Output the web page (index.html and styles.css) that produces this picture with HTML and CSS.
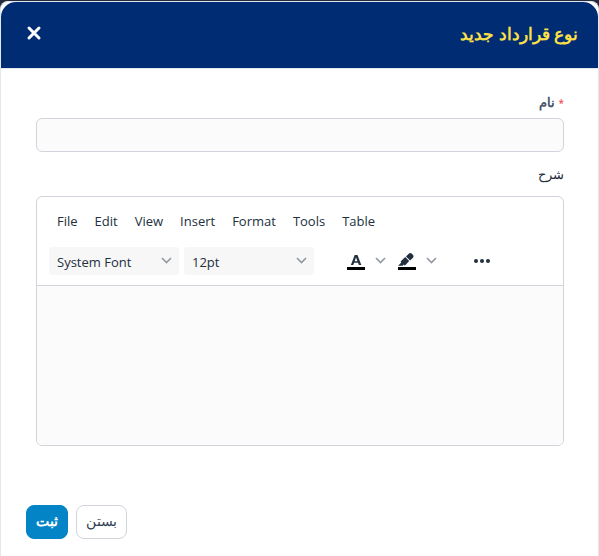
FILE: index.html
```html
<!DOCTYPE html>
<html lang="fa" dir="rtl">
<head>
<meta charset="UTF-8" />
<meta name="viewport" content="width=device-width, initial-scale=1.0"/>
<title>نوع قرارداد جدید</title>
<link rel="stylesheet" href="styles.css">
</head>

<body>

  <form class="modal">

    <header class="modal-header">
      <h1 class="modal-title">نوع قرارداد جدید</h1>
      <button type="button" class="close-btn" aria-label="بستن">
        <svg width="16" height="16" viewBox="0 0 16 16"><path d="M3 3l10 10M13 3L3 13" /></svg>
      </button>
    </header>

    <div class="modal-body">
      <label class="name-label" for="name"><span class="required">*</span> نام</label>
      <input class="name-input" type="text" id="name" name="name" required>

      <label class="desc-label" for="description">شرح</label>

      <div class="editor" dir="ltr">
        <div class="menubar">
          <button type="button">File</button>
          <button type="button">Edit</button>
          <button type="button">View</button>
          <button type="button">Insert</button>
          <button type="button">Format</button>
          <button type="button">Tools</button>
          <button type="button">Table</button>
        </div>

        <div class="toolbar">
          <div class="select-box">
            <select aria-label="Font">
              <option>System Font</option>
            </select>
            <svg class="chevron" width="11" height="8" viewBox="0 0 11 8"><path d="M1 1l4.500 4.500L10 1" /></svg>
          </div>
          <div class="select-box">
            <select aria-label="Font size">
              <option>12pt</option>
            </select>
            <svg class="chevron" width="11" height="8" viewBox="0 0 11 8"><path d="M1 1l4.500 4.500L10 1" /></svg>
          </div>

          <div class="color-group">
            <button type="button" class="tool-btn" aria-label="Text color">
              <svg width="24" height="24" viewBox="0 0 24 24">
                <path d="M3 18h18v3H3z" fill="#000" />
                <path fill-rule="evenodd" d="M9.300 16H6.900L10.700 6h2.800l3.800 10h-2.400l-.8-2.200h-4zM10.700 12.200h2.700L12 8.200z" fill="#222f3e" />
              </svg>
            </button>
            <button type="button" class="arrow-btn" aria-label="Text color menu">
              <svg class="chevron" width="11" height="8" viewBox="0 0 11 8"><path d="M1 1l4.500 4.500L10 1" /></svg>
            </button>
            <button type="button" class="tool-btn" aria-label="Background color">
              <svg width="24" height="24" viewBox="0 0 24 24">
                <path d="M3 18h18v3H3z" fill="#000" />
                <path d="M7.700 16.700H3l3.300-3.300-.7-.8L10.200 8l4 4.100-4 4.200c-.2.200-.6.200-.8 0l-.6-.7-1.100 1.100zm5-7.500L11 7.400l3-2.900a2 2 0 0 1 2.600 0L18 6c.7.700.7 2 0 2.700l-2.900 2.900-1.800-1.800-.5-.6" fill="#222f3e" />
              </svg>
            </button>
            <button type="button" class="arrow-btn" aria-label="Background color menu">
              <svg class="chevron" width="11" height="8" viewBox="0 0 11 8"><path d="M1 1l4.500 4.500L10 1" /></svg>
            </button>
          </div>

          <button type="button" class="tool-btn" aria-label="More">
            <svg width="24" height="24" viewBox="0 0 24 24" fill="#222f3e">
              <circle cx="6" cy="12" r="2" />
              <circle cx="12" cy="12" r="2" />
              <circle cx="18" cy="12" r="2" />
            </svg>
          </button>
        </div>

        <textarea class="editor-area" id="description" name="description" dir="rtl"></textarea>
      </div>
    </div>

    <footer class="modal-footer">
      <button type="button" class="btn">بستن</button>
      <button type="submit" class="btn btn-primary">ثبت</button>
    </footer>

  </form>

</body>
</html>
```
FILE: styles.css
```css
* {
  box-sizing: border-box;
}

body {
  margin: 0;
  min-height: 100vh;
  padding-top: 1px;
  background-color: #252b3b;
  color: #1e293b;
  font-family: "Noto Sans", sans-serif;
  font-size: 13px;
}

button, input, select, textarea {
  font-family: inherit;
  font-size: 13px;
  color: inherit;
}

button {
  border: none;
  padding: 0;
  background: none;
  cursor: pointer;
}

svg {
  display: block;
}

.modal {
  min-height: calc(100vh - 1px);
  display: flex;
  flex-direction: column;
  background-color: white;
  border: 1px solid #e2e8f0;
  border-bottom: none;
  border-radius: 8px 8px 0 0;
}

.modal-header {
  display: flex;
  justify-content: space-between;
  align-items: center;
  height: 66px;
  padding: 0 20px 4px 25px;
  background-color: #002c73;
  border-radius: 15px 15px 0 0;
}

.modal-title {
  margin: 0;
  color: #fde047;
  font-size: 17px;
  font-weight: bold;
}

.close-btn path {
  fill: none;
  stroke: white;
  stroke-width: 3;
  stroke-linecap: round;
}

.modal-body {
  display: flex;
  flex-direction: column;
  padding: 24px 34px 0 35px;
  border-top: 1px solid #e2e8f0;
}

.name-label {
  height: 25px;
  line-height: 18px;
  color: #475569;
  font-weight: bold;
}

.required {
  color: #ef4444;
  font-size: 10px;
  font-weight: normal;
}

.name-input {
  height: 34px;
  padding: 4px 12px;
  background-color: #fbfbfb;
  border: 1px solid #d1d5db;
  border-radius: 6px;
}

.desc-label {
  height: 44px;
  line-height: 44px;
}

.editor {
  display: flex;
  flex-direction: column;
  height: 250px;
  border: 1px solid #d1d5db;
  border-radius: 6px;
  overflow: hidden;
  color: #222f3e;
  font-family: "Open Sans", sans-serif;
}

.menubar {
  display: flex;
  flex-wrap: wrap;
  gap: 1px;
  padding: 10px 12px 0;
}

.menubar button {
  height: 28px;
  padding: 0 8px;
}

.toolbar {
  display: flex;
  align-items: center;
  gap: 5px;
  padding: 12px 12px 10px;
  border-bottom: 1px solid #d1d5db;
}

.select-box {
  display: grid;
  align-items: center;
  width: 130px;
}

.select-box select,
.select-box .chevron {
  grid-area: 1 / 1;
}

.select-box select {
  appearance: none;
  height: 28px;
  padding: 2px 8px 0;
  border: none;
  border-radius: 3px;
  background-color: #f7f7f7;
}

.select-box .chevron {
  justify-self: end;
  margin-right: 7px;
  pointer-events: none;
}

.chevron path {
  fill: none;
  stroke: #9298a0;
  stroke-width: 1.6;
}

.color-group {
  display: flex;
  margin: 0 19px 0 20px;
}

.tool-btn {
  display: flex;
  justify-content: center;
  align-items: center;
  width: 34px;
  height: 28px;
}

.arrow-btn {
  display: flex;
  justify-content: flex-start;
  align-items: center;
  width: 17px;
  height: 28px;
  padding-left: 2px;
}

.editor-area {
  flex: 1;
  width: 100%;
  padding: 12px;
  border: none;
  background-color: #fbfbfb;
  resize: none;
  outline: none;
}

.modal-footer {
  display: flex;
  justify-content: flex-end;
  gap: 8px;
  margin-top: auto;
  padding: 20px 25px 17px;
}

.btn {
  height: 34px;
  padding: 0 9px 4px;
  border: 1px solid #d1d5db;
  border-radius: 8px;
  background-color: white;
  color: #334155;
  font-size: 14px;
}

.btn-primary {
  border-color: #0284c7;
  background-color: #0284c7;
  color: white;
  font-weight: bold;
}
```
